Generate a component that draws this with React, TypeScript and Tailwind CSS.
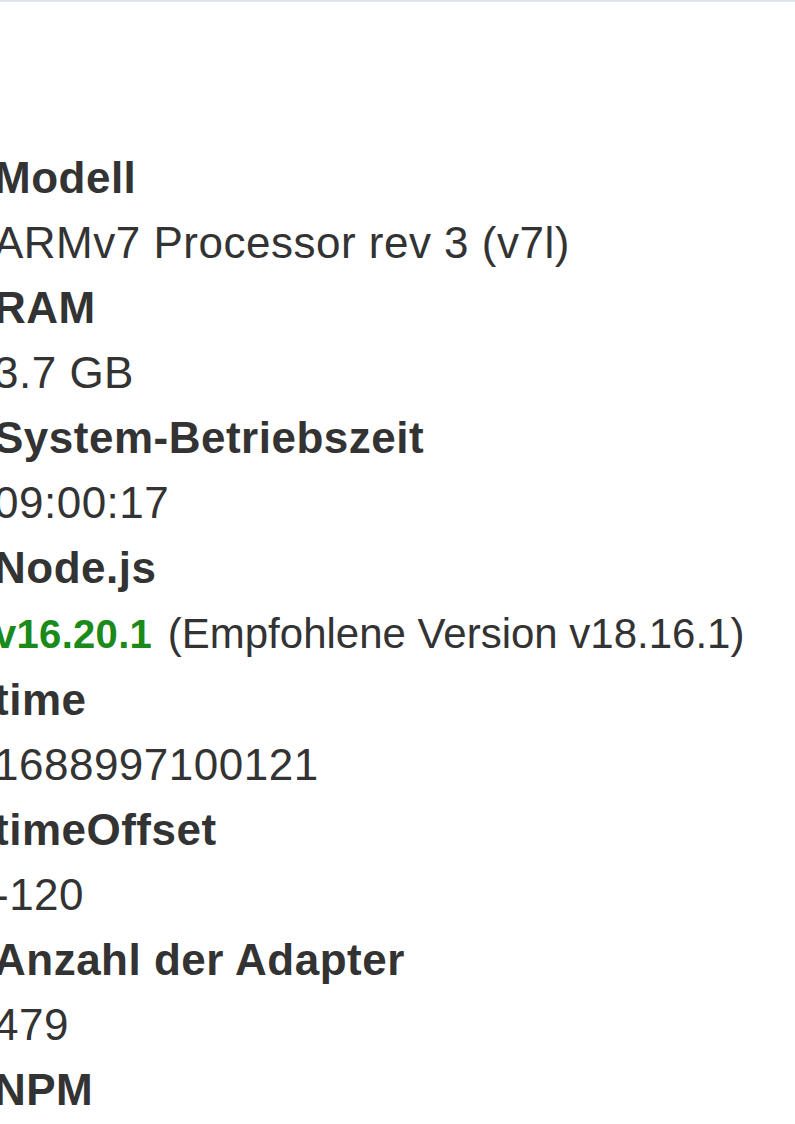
import React from "react";

const rows: { label: string; value: React.ReactNode }[] = [
  { label: "Modell", value: "ARMv7 Processor rev 3 (v7l)" },
  { label: "RAM", value: "3.7 GB" },
  { label: "System-Betriebszeit", value: "09:00:17" },
  {
    label: "Node.js",
    value: (
      <span className="text-[42px] tracking-[0px]">
        <span className="text-[40px] font-bold tracking-[0.3px] text-[#1a8a1a] mr-[4px]">v16.20.1</span> (Empfohlene Version v18.16.1)
      </span>
    ),
  },
  { label: "time", value: "1688997100121" },
  { label: "timeOffset", value: "-120" },
  { label: "Anzahl der Adapter", value: "479" },
  { label: "NPM", value: "" },
];

export default function App() {
  return (
    <div className="w-[795px] h-[1124px] overflow-hidden bg-white">
      <div className="h-[2px] bg-[#dde4ec]" />
      <div
        className="pt-[143px] ml-[-6px] text-[44px] leading-[65px] tracking-[0.5px] text-[#333333]"
        style={{ fontFamily: '"Liberation Sans", Arial, sans-serif' }}
      >
        {rows.map((r) => (
          <div key={r.label}>
            <div className="font-bold whitespace-nowrap">{r.label}</div>
            {r.value !== "" && <div className="whitespace-nowrap">{r.value}</div>}
          </div>
        ))}
      </div>
    </div>
  );
}
